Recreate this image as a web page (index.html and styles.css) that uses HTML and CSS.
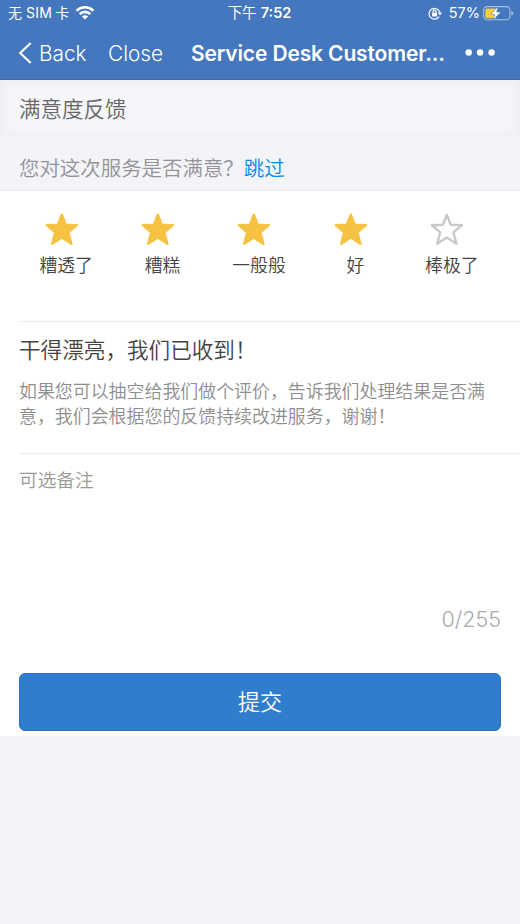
FILE: index.html
```html
<!DOCTYPE html>
<html lang="zh-CN">
<head>
<meta charset="utf-8">
<title>满意度反馈</title>
<link rel="stylesheet" href="styles.css">
</head>
<body>
<svg class="defs" width="0" height="0" aria-hidden="true">
  <symbol id="star" viewBox="0 0 34 33">
    <path d="M16.8 1.7 L20.7 11.8 L31.9 12.2 L23.4 19.4 L26.4 30.8 L16.8 24.6 L7.2 30.8 L10.2 19.4 L1.7 12.2 L12.9 11.8 Z" stroke-width="2.4" stroke-linejoin="round"/>
  </symbol>
</svg>
<header class="top">
  <div class="status">
    <div class="carrier">
      <span>无<span class="sim">SIM</span>卡</span>
      <svg width="20" height="14" viewBox="0 0 20 14" fill="none" stroke="#fff" stroke-width="2.7">
        <path d="M1.6 4.7 C6.2 .1 13.8 .1 18.4 4.7"/>
        <path d="M4.7 8.1 C7.6 5.1 12.4 5.1 15.3 8.1"/>
        <path d="M10 13.6 L6.9 10.5 C8.6 8.8 11.4 8.8 13.1 10.5 Z" fill="#fff" stroke="none"/>
      </svg>
    </div>
    <div class="time">下午 <b>7:52</b></div>
    <div class="power">
      <svg width="14" height="13" viewBox="0 0 14 13" fill="none" stroke="#fff" stroke-width="1.2">
        <path d="M11.1 9.6 A5.4 5.4 0 1 1 11.7 5.4"/>
        <path d="M9.9 5.6 L14 5.6 L12 8.4 Z" fill="#fff" stroke="none"/>
        <rect x="4.1" y="5.8" width="5" height="3.8" rx=".5" fill="#fff" stroke="none"/>
        <path d="M5.1 6 V4.7 a1.5 1.5 0 0 1 3 0 V6"/>
      </svg>
      <span class="percent">57%</span>
      <svg width="31" height="15" viewBox="0 0 31 15">
        <rect x=".6" y=".6" width="26.4" height="13.2" rx="3.8" fill="none" stroke="#a6c1e5" stroke-width="1.1"/>
        <path d="M28.4 5 Q30.2 5.6 30.2 7.3 Q30.2 9 28.4 9.6 Z" fill="#a6c1e5"/>
        <path d="M4 2.4 H13 V12.2 H4 Q2.3 12.2 2.3 10.5 V4.1 Q2.3 2.4 4 2.4 Z" fill="#fbce3b"/>
        <path d="M14.8 1 L8.2 8.2 H12.2 L10.4 13.6 L17.4 6.3 H13.3 Z" fill="#fff" stroke="#4576bd" stroke-width="1" paint-order="stroke"/>
      </svg>
    </div>
  </div>
  <nav class="nav">
    <svg class="chevron" width="14" height="22" viewBox="0 0 14 22" fill="none" stroke="#fff" stroke-width="2.1"><path d="M12.7 1 L2.2 11 L12.7 21"/></svg>
    <a class="back">Back</a>
    <a class="close">Close</a>
    <h1>Service Desk Customer...</h1>
    <svg class="more" width="30" height="8" viewBox="0 0 30 8" fill="#fff"><circle cx="3.7" cy="3.5" r="3.2"/><circle cx="15.1" cy="3.5" r="3.2"/><circle cx="26.6" cy="3.5" r="3.2"/></svg>
  </nav>
</header>
<div class="title">满意度反馈</div>
<div class="question">您对这次服务是否满意？<a>跳过</a></div>
<main class="form">
  <div class="ratings">
    <div class="rating on"><svg><use href="#star"/></svg><span>糟透了</span></div>
    <div class="rating on"><svg><use href="#star"/></svg><span>糟糕</span></div>
    <div class="rating on"><svg><use href="#star"/></svg><span>一般般</span></div>
    <div class="rating on"><svg><use href="#star"/></svg><span>好</span></div>
    <div class="rating"><svg><use href="#star"/></svg><span>棒极了</span></div>
  </div>
  <section class="message">
    <h2>干得漂亮，我们已收到！</h2>
    <p>如果您可以抽空给我们做个评价，告诉我们处理结果是否满<br>意，我们会根据您的反馈持续改进服务，谢谢！</p>
  </section>
  <section class="remark">
    <div class="hint">可选备注</div>
    <div class="count">0/255</div>
  </section>
  <button class="submit">提交</button>
</main>
</body>
</html>
```
FILE: styles.css
```css
* { box-sizing: border-box; }
body {
  margin: 0;
  min-height: 924px;
  background: #f3f3f8;
  font-family: Inter, "Noto Sans CJK SC", sans-serif;
  font-weight: 350;
  color: #444;
}
.defs { position: absolute; }
.top {
  height: 80px;
  background: #4477bd;
  color: #fff;
  border-bottom: 1px solid #3e6dac;
}
.status {
  height: 26px;
  display: grid;
  grid-template-columns: 1fr auto 1fr;
  align-items: center;
  padding: 0 6px 0 8px;
  font-size: 14px;
  line-height: 20px;
  font-weight: 400;
}
.carrier, .power { display: flex; align-items: center; }
.carrier { gap: 6px; }
.sim { margin: 0 3px 0 4px; letter-spacing: .3px; }
.time { margin-right: 3px; font-size: 14.5px; }
.time b { font-weight: 600; }
.power { justify-content: flex-end; }
.percent { margin: 0 3px 0 7px; font-size: 14.5px; }
.nav {
  height: 54px;
  display: flex;
  align-items: center;
  padding-left: 18px;
  font-size: 20.8px;
  white-space: nowrap;
}
.back { margin-left: 7px; width: 69px; }
.close { width: 83px; }
.nav h1 { margin: 0; width: 274px; font-size: 21px; font-weight: 600; letter-spacing: -.14px; }
.title {
  height: 57px;
  padding-left: 19px;
  line-height: 58px;
  font-size: 21.5px;
  color: #666;
  background: #f5f5fa;
  box-shadow: inset 0 0 12px 2px #eeeef1;
}
.question {
  height: 54px;
  padding-left: 19px;
  line-height: 63px;
  font-size: 20.45px;
  color: #929297;
  border-bottom: 1px solid #e9e9ec;
}
.question a { color: #0b86ea; }
.form { height: 545px; background: #fff; }
.ratings {
  height: 130px;
  padding: 22px 20px 0 18px;
  display: grid;
  grid-template-columns: repeat(5, 1fr);
}
.rating { display: flex; flex-direction: column; align-items: center; }
.rating svg {
  width: 34px;
  height: 33px;
  margin-right: 9px;
  fill: none;
  stroke: #c8c8c8;
}
.rating.on svg { fill: #f5c242; stroke: #f5c242; }
.rating span { font-size: 17.8px; line-height: 24px; margin-top: 8px; }
.message {
  height: 132px;
  margin-left: 19px;
  padding-top: 12px;
  border-top: 1px solid #ececec;
}
.message h2 { margin: 0; font-size: 21.6px; line-height: 32px; font-weight: 350; }
.message p { margin: 13px 0 0; font-size: 17.93px; line-height: 25px; color: #8e8e8e; white-space: nowrap; }
.remark {
  height: 220px;
  margin-left: 19px;
  padding: 13px 19px 0 0;
  border-top: 1px solid #ececec;
  color: #999;
}
.hint { height: 137px; font-size: 18.7px; line-height: 28px; }
.count { font-size: 21.5px; line-height: 30px; text-align: right; color: #aaa; }
.submit {
  display: block;
  width: 482px;
  height: 58px;
  margin: 0 19px;
  padding: 0 0 4px;
  border: 1px solid #2a72bd;
  border-radius: 6px;
  background: #307dcd;
  color: #fff;
  font: inherit;
  font-size: 22px;
}
```
